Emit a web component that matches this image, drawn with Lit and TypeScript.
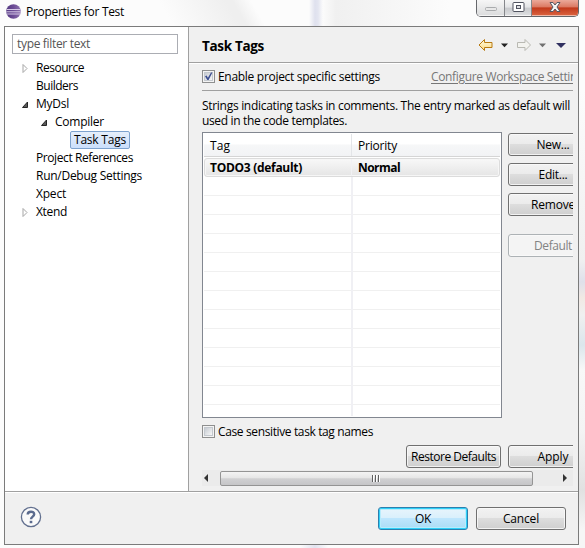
import { LitElement, html, css, svg, nothing } from "lit";
import { customElement, property } from "lit/decorators.js";
import { classMap } from "lit/directives/class-map.js";

interface TreeNode {
  label: string;
  level: number;
  width: number;
  state?: "open" | "closed";
  selected?: boolean;
}

const TREE: TreeNode[] = [
  { label: "Resource", level: 0, width: 48, state: "closed" },
  { label: "Builders", level: 0, width: 42 },
  { label: "MyDsl", level: 0, width: 33, state: "open" },
  { label: "Compiler", level: 1, width: 49, state: "open" },
  { label: "Task Tags", level: 2, width: 52, selected: true },
  { label: "Project References", level: 0, width: 97 },
  { label: "Run/Debug Settings", level: 0, width: 106 },
  { label: "Xpect", level: 0, width: 30 },
  { label: "Xtend", level: 0, width: 31, state: "closed" },
];

/** A single line label whose letter spacing is fitted to a given width. */
@customElement("ui-label")
export class UiLabel extends LitElement {
  @property({ type: Number }) width = 0;
  @property() text = "";

  static styles = css`
    :host { display: block; white-space: pre; flex: none; }
    span { display: inline-block; vertical-align: top; }
    :host(.link) span { text-decoration: underline; text-underline-offset: 2px; }
  `;

  render() {
    return html`<span>${this.text}</span>`;
  }

  updated() {
    const span = this.renderRoot.querySelector("span")!;
    span.style.letterSpacing = "0px";
    const natural = span.getBoundingClientRect().width;
    span.style.letterSpacing = `${(this.width - natural) / this.text.length}px`;
  }
}

@customElement("ui-button")
export class UiButton extends LitElement {
  @property() text = "";
  @property({ type: Number }) width = 0;
  @property() variant = "";

  static styles = css`
    :host { display: block; height: 23px; flex: none; }
    button {
      display: flex; align-items: center; justify-content: center;
      box-sizing: border-box; width: 100%; height: 23px; padding: 1px 0 0;
      border: 1px solid #707070; border-radius: 3px;
      font: inherit; color: #000;
      background: linear-gradient(#f2f2f2 0, #ebebeb 48%, #dddddd 50%, #cfcfcf 100%);
      box-shadow: inset 0 0 0 1px #fafafacc;
    }
    .primary {
      border-color: #2c7fae;
      background: linear-gradient(#e8f5fc 0, #d9f0fc 48%, #bee6fd 50%, #aadcf5 100%);
      box-shadow: inset 0 0 0 1px #2fd0f8, inset 0 0 0 2px #b8ecfc;
    }
    .off { border-color: #adb2b5; color: #838383; background: #f4f4f4; }
  `;

  render() {
    return html`<button class=${classMap({ primary: this.variant === "primary", off: this.variant === "off" })}>
      <ui-label .text=${this.text} .width=${this.width}></ui-label>
    </button>`;
  }
}

@customElement("ui-check")
export class UiCheck extends LitElement {
  @property({ type: Boolean }) checked = false;

  static styles = css`
    :host { display: block; width: 13px; height: 13px; flex: none; }
    svg { display: block; }
  `;

  render() {
    return html`<svg width="13" height="13" viewBox="0 0 13 13">
      <defs><linearGradient id="g" x2="1" y2="1"><stop stop-color="#c3c8cf" /><stop offset="1" stop-color="#fbfbfb" /></linearGradient></defs>
      <rect x=".5" y=".5" width="12" height="12" fill="#f4f4f4" stroke="#8e8f8f" />
      <rect x="2.5" y="2.5" width="8" height="8" fill="url(#g)" stroke="#c4c9cf" />
      ${this.checked ? svg`<path d="M3 6.2 L4.6 5.6 L5.9 7.8 L9 2.4 L10.4 2.4 L6.6 10 L5.3 10 Z" fill="#3d4f91" />` : nothing}
    </svg>`;
  }
}

@customElement("app-root")
export class AppRoot extends LitElement {
  static styles = css`
    :host {
      display: block; width: 585px; height: 548px; overflow: hidden;
      font: 12px/18px "Open Sans", "Noto Sans", sans-serif; color: #000;
    }
    * { box-sizing: border-box; }
    svg { display: block; flex: none; }
    .window {
      width: 585px; height: 548px; display: flex; flex-direction: column; padding: 0 6px 0 4px;
      background:
        linear-gradient(90deg, transparent 309px, #dfe1ee 315px, #e3e5f0 318px, transparent 323px) 0 0 / 100% 26px no-repeat,
        linear-gradient(60deg, transparent 150px, #efefef 208px, #efefef 214px, transparent 230px) 0 0 / 100% 26px no-repeat,
        linear-gradient(90deg, transparent 322px, #f0f0f0 336px, #fcfcfc 450px) 0 0 / 100% 26px no-repeat,
        linear-gradient(90deg, transparent 300px, #e2e3ef 315px, transparent 328px) 0 100% / 100% 3px no-repeat,
        linear-gradient(transparent 90px, #f0f0f0 260px, #dfe0ea 282px, #f1e9e4 298px, #f0f0f0 315px, #dbe6ec 345px, #f8f8f8 370px, #f4f4f4 430px, #e1e1e1 490px, #f6f6f6 530px) 100% 0 / 6px 100% no-repeat,
        #fcfcfc;
    }
    .titlebar { height: 26px; flex: none; display: flex; align-items: flex-start; }
    .titlebar .logo { margin: 3px 0 0 1px; }
    .titlebar .title { margin: 3px 0 0 5px; }
    .captions {
      display: flex; margin-left: auto; height: 17px; width: 103px;
      border: 1px solid #66686c; border-top: 0; border-radius: 0 0 5px 5px; overflow: hidden;
    }
    .cap {
      display: flex; justify-content: center; border-right: 1px solid #85878b;
      background: linear-gradient(#f5f5f5 0, #e3e4e6 45%, #c8cacd 50%, #dfe0e2 100%);
      box-shadow: inset 0 -1px #f4f4f4;
    }
    .min { width: 28px; background: linear-gradient(#f6f6f6, #dadbdc); }
    .max { width: 27px; }
    .close {
      flex: 1; border-right: 0; box-shadow: inset 0 -1px #efb8a8;
      background: linear-gradient(#eba99a 0, #dc7b65 42%, #c23a1c 50%, #dc6642 100%);
    }
    .client {
      width: 575px; height: 519px; flex: none; display: grid; grid-template: 464px 1fr / 183px 1fr;
      border: 1px solid #7b7b7b; background: #f0f0f0;
    }
    .nav { background: #fff; padding: 7px; }
    .filter {
      height: 20px; width: 166px; border: 1px solid #abadb3; padding: 0 4px;
      display: flex; align-items: center; color: #555; line-height: 18px;
    }
    .tree { margin-top: 5px; }
    .node { display: flex; height: 18px; align-items: center; padding-left: 10px; }
    .node.l1 { padding-left: 29px; }
    .node.l2 { padding-left: 58px; }
    .arrow { width: 14px; display: flex; }
    .node.l2 .arrow { display: none; }
    .sel {
      height: 18px; width: 60px; padding: 0 3px; border: 1px solid #7da2ce; border-radius: 2px;
      background: linear-gradient(#e6effb, #cbdffb); line-height: 16px;
    }
    .page { border-left: 1px solid #a0a0a0; display: flex; flex-direction: column; min-width: 0; background: #f0f0f0; }
    .head {
      height: 36px; flex: none; display: flex; align-items: center; padding: 0 12px 0 13px;
      border-bottom: 1px solid #a0a0a0; box-shadow: 0 1px #fff;
    }
    .head h1 { margin: 0 auto 0 0; padding-top: 3px; font-size: 13.5px; line-height: 20px; }
    .body { margin: 0 5px 0 13px; flex: 1; overflow: hidden; display: flex; flex-direction: column; min-width: 0; }
    .enable {
      height: 28px; display: flex; align-items: center; gap: 3px; flex: none;
      border-bottom: 1px solid #a0a0a0;
    }
    .enable ui-label, .case ui-label { padding-top: 1px; }
    .enable .link { color: #777; margin-left: 48px; }
    .intro { margin-top: 7px; line-height: 15px; height: 34px; flex: none; display: flex; flex-direction: column; }
    .row { display: flex; flex: none; }
    .table { width: 300px; height: 286px; flex: none; border: 1px solid #828790; background: #fff; padding: 1px 1px 0; }
    .thead { display: flex; height: 23px; background: linear-gradient(#fff 45%, #f6f7f8 50%, #f2f3f5); border-bottom: 1px solid #d5d5d5; }
    .cell { width: 148px; padding: 2px 0 0 6px; border-right: 1px solid #e3e5e8; line-height: 20px; }
    .cell + .cell { flex: 1; border-right: 0; }
    .item {
      display: flex; height: 19px; margin-top: 1px; font-weight: 700; border: 1px solid #dcdcdc;
      border-radius: 3px; background: linear-gradient(#f8f8f8, #e5e5e5); box-shadow: inset 0 0 0 1px #f6f6f6;
    }
    .item .cell { width: 147px; padding: 0 0 0 5px; line-height: 17px; border-right-color: #f1f1f4; }
    .item .cell + .cell { padding-left: 6px; }
    .grid {
      height: 239px; background:
        linear-gradient(#f0f0f4, #f0f0f4) 147px 0 / 2px 100% no-repeat,
        repeating-linear-gradient(transparent 0 18px, #f0f0f0 18px 19px);
    }
    .side { width: 90px; margin: 1px 0 0 6px; display: flex; flex-direction: column; gap: 7px; flex: none; }
    .side ui-button:last-child { margin-top: 11px; }
    .case { display: flex; gap: 3px; align-items: center; height: 27px; flex: none; }
    .actions { display: flex; gap: 7px; margin: 0 0 2px 204px; flex: none; }
    .restore { width: 95px; }
    .apply { width: 90px; }
    .scroll { height: 16px; flex: none; display: flex; align-items: center; background: #ebebeb; }
    .thumb {
      width: 313px; height: 15px; border: 1px solid #949494; border-radius: 2px; margin: 0 28px 0 12px;
      display: flex; align-items: center; justify-content: center; flex: none;
      background: linear-gradient(#f4f4f4 0, #e6e6e6 45%, #d0d0d2 52%, #c6c6c8 100%);
    }
    .footer {
      grid-column: 1 / 3; border-top: 1px solid #a0a0a0; box-shadow: inset 0 1px #fff;
      display: flex; align-items: flex-start; padding: 14px 12px 0 15px; gap: 8px;
    }
    .footer ui-button { width: 90px; margin-top: 1px; }
    .ok { margin-left: auto; }
  `;

  private node(n: TreeNode) {
    const label = html`<ui-label .text=${n.label} .width=${n.width}></ui-label>`;
    return html`<div class=${classMap({ node: true, [`l${n.level}`]: true })}>
      <div class="arrow">
        ${n.state === "closed"
          ? html`<svg width="6" height="10" viewBox="0 0 6 10"><path d="M1 1.5 L5 5.5 L1 9.5 Z" fill="#fff" stroke="#a6a6a6" /></svg>`
          : n.state === "open"
            ? html`<svg width="6" height="8" viewBox="0 0 6 8"><path d="M5.5 2 V7.5 H.5 Z" fill="#595959" stroke="#262626" /></svg>`
            : nothing}
      </div>
      ${n.selected ? html`<div class="sel">${label}</div>` : label}
    </div>`;
  }

  private text(text: string, width: number) {
    return html`<ui-label .text=${text} .width=${width}></ui-label>`;
  }

  render() {
    return html`<div class="window">
      <div class="titlebar">
        <svg class="logo" width="16" height="16" viewBox="0 0 16 16">
          <defs><linearGradient id="e" x2="1"><stop stop-color="#50377f" /><stop offset=".5" stop-color="#6d4c96" /><stop offset="1" stop-color="#8d73ad" /></linearGradient></defs>
          <circle cx="8.5" cy="8.5" r="7.3" fill="url(#e)" />
          <path d="M1.5 6.5H15.5M1.2 8.8H15.8M1.5 11H15.5" stroke="#d6c9e6" stroke-width="1" />
        </svg>
        <div class="title">${this.text("Properties for Test", 98)}</div>
        <div class="captions">
          <div class="cap min"><svg width="13" height="16" viewBox="0 0 13 16"><rect x="1.5" y="7.5" width="11" height="3" rx="1" fill="#e8e8e8" stroke="#a9abad" /></svg></div>
          <div class="cap max"><svg width="13" height="16" viewBox="0 0 13 16"><rect x="1" y="2.5" width="11" height="9" rx="1" fill="#fff" stroke="#50535f" /><rect x="4.5" y="5.5" width="4" height="3" fill="#dcdde0" stroke="#50535f" /></svg></div>
          <div class="cap close"><svg width="14" height="16" viewBox="0 0 14 16"><path d="M2 2.5H5L7 5L9 2.5H12L9 7L12 11.5H9L7 9L5 11.5H2L5 7Z" fill="#f4f4f4" stroke="#555764" /></svg></div>
        </div>
      </div>
      <div class="client">
        <div class="nav">
          <div class="filter">${this.text("type filter text", 73)}</div>
          <div class="tree">${TREE.map((n) => this.node(n))}</div>
        </div>
        <div class="page">
          <div class="head">
            <h1>${this.text("Task Tags", 62)}</h1>
            <svg width="88" height="14" viewBox="0 0 88 14">
              <defs><linearGradient id="y" x2="0" y2="1"><stop stop-color="#fffbe2" /><stop offset="1" stop-color="#fbd982" /></linearGradient></defs>
              <path d="M1 7 L6.5 1.5 V4.5 H14 V9.5 H6.5 V12.5 Z" fill="url(#y)" stroke="#b87a13" />
              <path d="M23 5.5 H30 L26.5 9.3 Z" fill="#222" />
              <path d="M52.5 7 L47 1.5 V4.5 H39.5 V9.5 H47 V12.5 Z" fill="#f3f3ef" stroke="#b9b9b2" />
              <path d="M61 5.5 H68 L64.5 9.3 Z" fill="#707070" />
              <path d="M78 5 H88 L83 10 Z" fill="#303060" />
            </svg>
          </div>
          <div class="body">
            <div class="enable">
              <ui-check checked></ui-check>
              ${this.text("Enable project specific settings", 162)}
              <ui-label class="link" text="Configure Workspace Settings..." .width=${166}></ui-label>
            </div>
            <div class="intro">
              ${this.text("Strings indicating tasks in comments. The entry marked as default will", 368)}
              ${this.text("used in the code templates.", 145)}
            </div>
            <div class="row">
              <div class="table">
                <div class="thead"><div class="cell">${this.text("Tag", 20)}</div><div class="cell">${this.text("Priority", 39)}</div></div>
                <div class="item"><div class="cell">${this.text("TODO3 (default)", 92)}</div><div class="cell">${this.text("Normal", 42)}</div></div>
                <div class="grid"></div>
              </div>
              <div class="side">
                <ui-button text="New..." .width=${33}></ui-button>
                <ui-button text="Edit..." .width=${29}></ui-button>
                <ui-button text="Remove" .width=${44}></ui-button>
                <ui-button text="Default" .width=${38} variant="off"></ui-button>
              </div>
            </div>
            <div class="case"><ui-check></ui-check>${this.text("Case sensitive task tag names", 155)}</div>
            <div class="actions">
              <ui-button class="restore" text="Restore Defaults" .width=${85}></ui-button>
              <ui-button class="apply" text="Apply" .width=${31}></ui-button>
            </div>
            <div class="scroll">
              <svg width="6" height="8" viewBox="0 0 6 8"><path d="M6 0V8L2 4Z" fill="#333" /></svg>
              <div class="thumb"><svg width="9" height="7" viewBox="0 0 9 7"><path d="M.5 0V7M3.5 0V7M6.5 0V7" stroke="#606060" /><path d="M1.5 0V7M4.5 0V7M7.5 0V7" stroke="#fff" /></svg></div>
              <svg width="6" height="8" viewBox="0 0 6 8"><path d="M2 0V8L6 4Z" fill="#333" /></svg>
            </div>
          </div>
        </div>
        <div class="footer">
          <svg width="22" height="22" viewBox="0 0 22 22">
            <circle cx="11" cy="11" r="9.6" fill="#fafafa" stroke="#62708f" stroke-width="1.3" />
            <path d="M7.7 8.6C7.7 4.8 14.2 4.8 14.2 8.3C14.2 10.6 11 10.6 11 13.2" fill="none" stroke="#5b6b8e" stroke-width="2.4" />
            <rect x="9.7" y="14.8" width="2.6" height="2.4" fill="#5b6b8e" />
          </svg>
          <ui-button class="ok" text="OK" .width=${16} variant="primary"></ui-button>
          <ui-button text="Cancel" .width=${36}></ui-button>
        </div>
      </div>
    </div>`;
  }
}
